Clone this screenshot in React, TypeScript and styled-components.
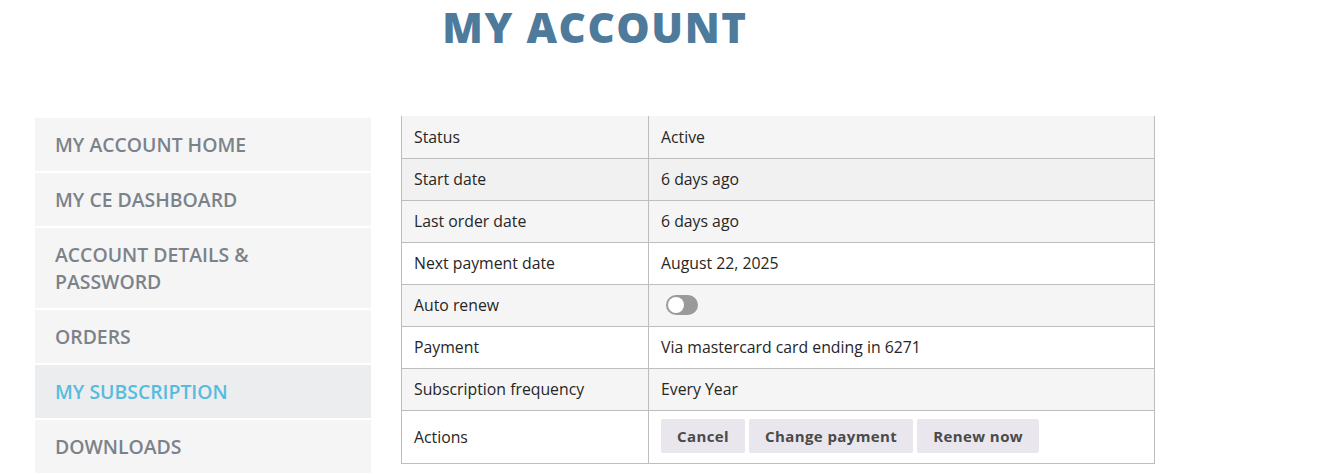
import React from "react";
import styled, { createGlobalStyle } from "styled-components";

const GlobalStyle = createGlobalStyle`
  body {
    margin: 0;
    background: #fff;
    font-family: "Open Sans", "Liberation Sans", sans-serif;
  }
`;

const navItems = [
  "MY ACCOUNT HOME",
  "MY CE DASHBOARD",
  "ACCOUNT DETAILS & PASSWORD",
  "ORDERS",
  "MY SUBSCRIPTION",
  "DOWNLOADS",
];

interface Row {
  label: string;
  value?: string;
  bg: string;
  kind?: "toggle" | "actions";
}

const rows: Row[] = [
  { label: "Status", value: "Active", bg: "#f5f5f5" },
  { label: "Start date", value: "6 days ago", bg: "#f1f1f1" },
  { label: "Last order date", value: "6 days ago", bg: "#f5f5f5" },
  { label: "Next payment date", value: "August 22, 2025", bg: "#ffffff" },
  { label: "Auto renew", bg: "#f5f5f5", kind: "toggle" },
  { label: "Payment", value: "Via mastercard card ending in 6271", bg: "#ffffff" },
  { label: "Subscription frequency", value: "Every Year", bg: "#f5f5f5" },
  { label: "Actions", bg: "#ffffff", kind: "actions" },
];

export default function App(): JSX.Element {
  return (
    <Page>
      <GlobalStyle />
      <Title>MY ACCOUNT</Title>
      <Layout>
        <Nav>
          {navItems.map((item) => (
            <NavItem key={item} $active={item === "MY SUBSCRIPTION"}>
              {item}
            </NavItem>
          ))}
        </Nav>
        <Table>
          <tbody>
            {rows.map((row) => (
              <Tr key={row.label} $bg={row.bg} $tall={row.kind === "actions"}>
                <LabelCell>{row.label}</LabelCell>
                <ValueCell>
                  {row.kind === "toggle" ? (
                    <Toggle>
                      <Knob />
                    </Toggle>
                  ) : row.kind === "actions" ? (
                    <Actions>
                      <ActionButton>Cancel</ActionButton>
                      <ActionButton>Change payment</ActionButton>
                      <ActionButton>Renew now</ActionButton>
                    </Actions>
                  ) : (
                    row.value
                  )}
                </ValueCell>
              </Tr>
            ))}
          </tbody>
        </Table>
      </Layout>
    </Page>
  );
}

const Page = styled.div`
  width: 1120px;
  padding: 0 0 0 35px;
`;

const Title = styled.h1`
  margin: -2px 0 0;
  text-align: center;
  font-family: "Open Sans", sans-serif;
  font-weight: 800;
  font-size: 42px;
  line-height: 57px;
  letter-spacing: 1.6px;
  color: #4e7a9b;
`;

const Layout = styled.div`
  display: grid;
  grid-template-columns: 336px 754px;
  column-gap: 30px;
  align-items: start;
  margin-top: 62px;
`;

const Nav = styled.nav`
  display: flex;
  flex-direction: column;
  gap: 2px;
  margin-top: 1px;
`;

const NavItem = styled.div<{ $active?: boolean }>`
  padding: 13px 40px 13px 20px;
  background: ${(p) => (p.$active ? "#ecedef" : "#f5f5f5")};
  color: ${(p) => (p.$active ? "#56bcdf" : "#7b828a")};
  font-size: 19.4px;
  font-weight: 600;
  line-height: 27px;
`;

const Table = styled.table`
  margin-top: -1px;
  border-collapse: collapse;
  width: 754px;
  border-left: 1px solid #bdbdbd;
  border-right: 1px solid #bdbdbd;
  border-bottom: 1px solid #bdbdbd;
  font-size: 15.8px;
  color: #262626;
`;

const Tr = styled.tr<{ $bg: string; $tall?: boolean }>`
  background: ${(p) => p.$bg};
  height: ${(p) => (p.$tall ? "53px" : "42px")};
  &:not(:first-child) td {
    border-top: 1px solid #bdbdbd;
  }
`;

const LabelCell = styled.td`
  width: 222px;
  padding: 0 12px;
  border-right: 1px solid #bdbdbd;
`;

const ValueCell = styled.td`
  padding: 0 12px;
`;

const Toggle = styled.div`
  position: relative;
  width: 32px;
  height: 20px;
  margin-left: 5px;
  border-radius: 10px;
  background: #9a9a9a;
`;

const Knob = styled.span`
  position: absolute;
  left: 2px;
  top: 2px;
  width: 16px;
  height: 16px;
  border-radius: 50%;
  background: #fff;
`;

const Actions = styled.div`
  display: flex;
  gap: 4px;
  margin-top: -1px;
`;

const ActionButton = styled.button`
  height: 34px;
  padding: 0 16px;
  border: none;
  border-radius: 2px;
  background: #e9e6ed;
  color: #4a4a4a;
  font-family: "Open Sans", sans-serif;
  font-size: 15px;
  font-weight: 700;
  letter-spacing: 0.4px;
`;
